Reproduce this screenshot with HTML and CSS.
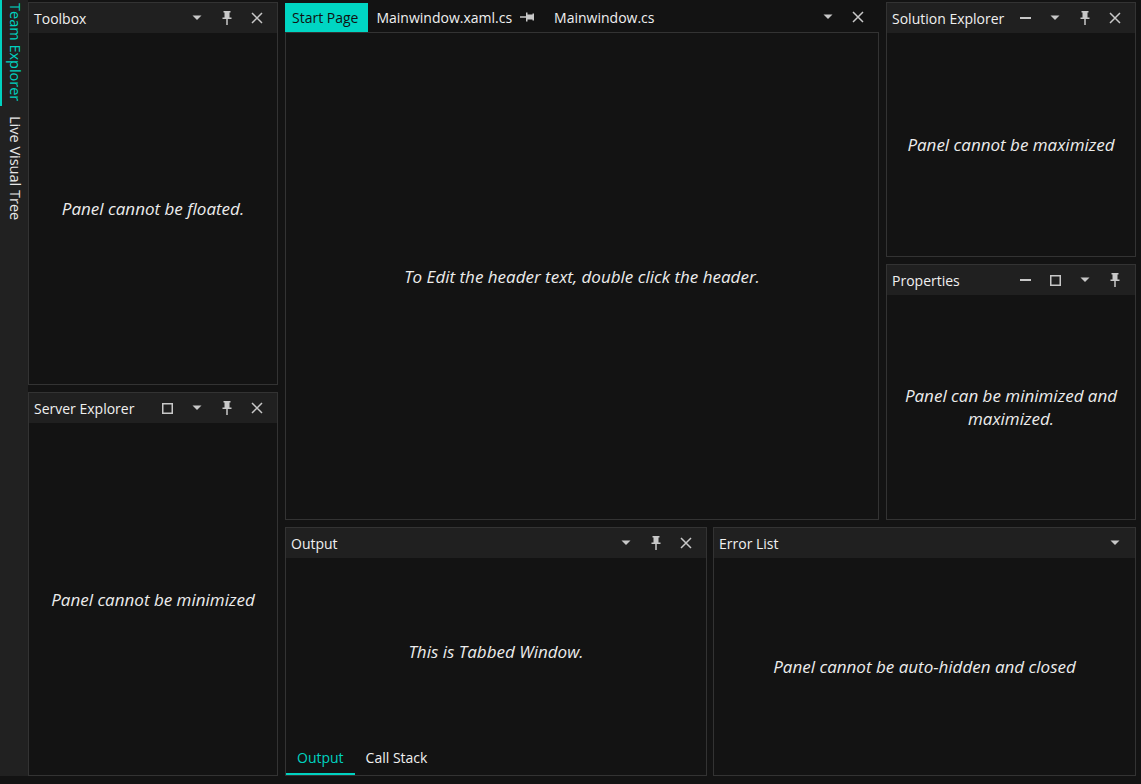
FILE: index.html
```html
<!DOCTYPE html>
<html>
<head>
<meta charset="utf-8">
<link rel="stylesheet" href="styles.css">
</head>
<body>
<div class="app">
  <div class="sidebar">
    <div class="side-tab active">Team Explorer</div>
    <div class="side-tab">Live Visual Tree</div>
  </div>
  <div class="workspace">
    <div class="col-left">
      <section class="panel toolbox">
        <header class="phead"><span class="ptitle">Toolbox</span>
          <span class="icons">
            <span class="ic"><svg width="10" height="6" viewBox="0 0 10 6"><path d="M0.5 0.5h9l-4.5 4.5z" fill="#c8c8c8"/></svg></span>
            <span class="ic"><svg width="10" height="14" viewBox="0 0 10 14"><path d="M1.5 0h7v1.5h-1v5h2v1.5h-3.75v6h-1.5v-6h-3.75v-1.5h2v-5h-1z" fill="#c8c8c8"/></svg></span>
            <span class="ic"><svg width="12" height="12" viewBox="0 0 12 12"><path d="M1 1L11 11M11 1L1 11" stroke="#c8c8c8" stroke-width="1.5"/></svg></span>
          </span>
        </header>
        <div class="pbody"><em>Panel cannot be floated.</em></div>
      </section>
      <section class="panel server">
        <header class="phead"><span class="ptitle">Server Explorer</span>
          <span class="icons">
            <span class="ic"><svg width="11" height="11" viewBox="0 0 11 11"><rect x="0.75" y="0.75" width="9.5" height="9.5" fill="none" stroke="#c8c8c8" stroke-width="1.5"/></svg></span>
            <span class="ic"><svg width="10" height="6" viewBox="0 0 10 6"><path d="M0.5 0.5h9l-4.5 4.5z" fill="#c8c8c8"/></svg></span>
            <span class="ic"><svg width="10" height="14" viewBox="0 0 10 14"><path d="M1.5 0h7v1.5h-1v5h2v1.5h-3.75v6h-1.5v-6h-3.75v-1.5h2v-5h-1z" fill="#c8c8c8"/></svg></span>
            <span class="ic"><svg width="12" height="12" viewBox="0 0 12 12"><path d="M1 1L11 11M11 1L1 11" stroke="#c8c8c8" stroke-width="1.5"/></svg></span>
          </span>
        </header>
        <div class="pbody"><em>Panel cannot be minimized</em></div>
      </section>
    </div>
    <div class="col-main">
      <div class="row-top">
        <section class="doc">
          <div class="doc-tabs">
            <span class="dtab active">Start Page</span>
            <span class="dtab">Mainwindow.xaml.cs</span>
            <span class="dpin"><svg width="14" height="10" viewBox="0 0 14 10"><path d="M0 4.25h6v-3.75h1.5v2h5v-1h1.5v7h-1.5v-1h-5v2h-1.5v-3.75h-6z" fill="#c8c8c8"/></svg></span>
            <span class="dtab">Mainwindow.cs</span>
            <span class="icons">
              <span class="ic"><svg width="10" height="6" viewBox="0 0 10 6"><path d="M0.5 0.5h9l-4.5 4.5z" fill="#c8c8c8"/></svg></span>
              <span class="ic"><svg width="12" height="12" viewBox="0 0 12 12"><path d="M1 1L11 11M11 1L1 11" stroke="#c8c8c8" stroke-width="1.5"/></svg></span>
            </span>
          </div>
          <div class="doc-body"><em>To Edit the header text, double click the header.</em></div>
        </section>
        <div class="col-right">
          <section class="panel solution">
            <header class="phead"><span class="ptitle">Solution Explorer</span>
              <span class="icons">
                <span class="ic"><svg width="11" height="2" viewBox="0 0 11 2"><rect width="11" height="2" fill="#c8c8c8"/></svg></span>
                <span class="ic"><svg width="10" height="6" viewBox="0 0 10 6"><path d="M0.5 0.5h9l-4.5 4.5z" fill="#c8c8c8"/></svg></span>
                <span class="ic"><svg width="10" height="14" viewBox="0 0 10 14"><path d="M1.5 0h7v1.5h-1v5h2v1.5h-3.75v6h-1.5v-6h-3.75v-1.5h2v-5h-1z" fill="#c8c8c8"/></svg></span>
                <span class="ic"><svg width="12" height="12" viewBox="0 0 12 12"><path d="M1 1L11 11M11 1L1 11" stroke="#c8c8c8" stroke-width="1.5"/></svg></span>
              </span>
            </header>
            <div class="pbody"><em>Panel cannot be maximized</em></div>
          </section>
          <section class="panel properties">
            <header class="phead"><span class="ptitle">Properties</span>
              <span class="icons">
                <span class="ic"><svg width="11" height="2" viewBox="0 0 11 2"><rect width="11" height="2" fill="#c8c8c8"/></svg></span>
                <span class="ic"><svg width="11" height="11" viewBox="0 0 11 11"><rect x="0.75" y="0.75" width="9.5" height="9.5" fill="none" stroke="#c8c8c8" stroke-width="1.5"/></svg></span>
                <span class="ic"><svg width="10" height="6" viewBox="0 0 10 6"><path d="M0.5 0.5h9l-4.5 4.5z" fill="#c8c8c8"/></svg></span>
                <span class="ic"><svg width="10" height="14" viewBox="0 0 10 14"><path d="M1.5 0h7v1.5h-1v5h2v1.5h-3.75v6h-1.5v-6h-3.75v-1.5h2v-5h-1z" fill="#c8c8c8"/></svg></span>
              </span>
            </header>
            <div class="pbody"><em>Panel can be minimized and maximized.</em></div>
          </section>
        </div>
      </div>
      <div class="row-bottom">
        <section class="panel output">
          <header class="phead"><span class="ptitle">Output</span>
            <span class="icons">
              <span class="ic"><svg width="10" height="6" viewBox="0 0 10 6"><path d="M0.5 0.5h9l-4.5 4.5z" fill="#c8c8c8"/></svg></span>
              <span class="ic"><svg width="10" height="14" viewBox="0 0 10 14"><path d="M1.5 0h7v1.5h-1v5h2v1.5h-3.75v6h-1.5v-6h-3.75v-1.5h2v-5h-1z" fill="#c8c8c8"/></svg></span>
              <span class="ic"><svg width="12" height="12" viewBox="0 0 12 12"><path d="M1 1L11 11M11 1L1 11" stroke="#c8c8c8" stroke-width="1.5"/></svg></span>
            </span>
          </header>
          <div class="pbody"><em>This is Tabbed Window.</em></div>
          <div class="btabs">
            <span class="btab active">Output</span>
            <span class="btab">Call Stack</span>
          </div>
        </section>
        <section class="panel errors">
          <header class="phead"><span class="ptitle">Error List</span>
            <span class="icons">
              <span class="ic"><svg width="10" height="6" viewBox="0 0 10 6"><path d="M0.5 0.5h9l-4.5 4.5z" fill="#c8c8c8"/></svg></span>
            </span>
          </header>
          <div class="pbody"><em>Panel cannot be auto-hidden and closed</em></div>
        </section>
      </div>
    </div>
  </div>
</div>
</body>
</html>
```

FILE: styles.css
```css
* { box-sizing: border-box; }
html, body {
  margin: 0;
  padding: 0;
  background: #131313;
  width: 1141px;
  height: 784px;
  overflow: hidden;
  font-family: "Open Sans", "Noto Sans", sans-serif;
  color: #f0f0f0;
}
.app {
  display: flex;
  height: 776px;
}
.sidebar {
  width: 28px;
  flex: none;
  background: #212121;
  display: flex;
  flex-direction: column;
  align-items: stretch;
}
.side-tab {
  writing-mode: vertical-rl;
  font-size: 14.5px;
  line-height: 22px;
  padding: 3px 0 5px 0;
  color: #e8e8e8;
  border-left: 2px solid transparent;
  text-align: center;
  display: flex;
  align-items: center;
}
.side-tab.active {
  color: #00d2c0;
  border-left-color: #00d2c0;
}
.side-tab + .side-tab { margin-top: 7px; }
.workspace {
  flex: 1;
  display: flex;
  gap: 7px;
  padding-top: 2px;
  padding-right: 5px;
}
.col-left {
  width: 250px;
  flex: none;
  display: flex;
  flex-direction: column;
  gap: 7px;
}
.toolbox { height: 383px; flex: none; }
.server { flex: 1; }
.col-main {
  flex: 1;
  display: flex;
  flex-direction: column;
  gap: 7px;
}
.row-top {
  height: 518px;
  flex: none;
  display: flex;
  gap: 7px;
}
.row-bottom {
  flex: 1;
  display: flex;
  gap: 6px;
}
.col-right {
  width: 250px;
  flex: none;
  display: flex;
  flex-direction: column;
  gap: 7px;
}
.solution { height: 255px; flex: none; }
.properties { flex: 1; }
.output { width: 422px; flex: none; }
.errors { flex: 1; }

.panel {
  border: 1px solid #333333;
  background: #131313;
  display: flex;
  flex-direction: column;
  min-height: 0;
}
.phead {
  height: 30px;
  flex: none;
  background: #202020;
  display: flex;
  align-items: center;
  padding-left: 5px;
  padding-right: 5px;
}
.ptitle {
  font-size: 14px;
  color: #f0f0f0;
  flex: 1;
  white-space: nowrap;
}
.icons {
  display: flex;
  align-items: center;
  margin-left: auto;
}
.ic {
  width: 30px;
  height: 30px;
  display: flex;
  align-items: center;
  justify-content: center;
}
.pbody {
  flex: 1;
  display: flex;
  align-items: center;
  justify-content: center;
  text-align: center;
  padding: 0 12px;
}
.pbody em {
  font-style: italic;
  font-size: 17px;
  line-height: 23px;
  color: #ececec;
}

.doc {
  width: 594px;
  flex: none;
  display: flex;
  flex-direction: column;
}
.doc-tabs {
  height: 30px;
  flex: none;
  display: flex;
  align-items: stretch;
  padding-right: 6px;
}
.dtab {
  font-size: 14px;
  display: flex;
  align-items: center;
  padding: 0 8px;
  color: #f0f0f0;
  white-space: nowrap;
}
.dtab.active {
  background: #00d6c3;
  color: #111111;
  padding: 0 10px 0 7px;
  margin-top: 1px;
}
.dpin {
  display: flex;
  align-items: center;
  padding: 0 12px 0 0;
}
.doc-body {
  flex: 1;
  border: 1px solid #333333;
  display: flex;
  align-items: center;
  justify-content: center;
}
.doc-body em {
  font-style: italic;
  font-size: 17px;
  color: #ececec;
}

.btabs {
  height: 30px;
  flex: none;
  display: flex;
  align-items: stretch;
}
.btab {
  font-size: 14px;
  padding: 0 11px 3px;
  display: flex;
  align-items: center;
  color: #f0f0f0;
  border-bottom: 2px solid transparent;
}
.btab.active {
  color: #00d2c0;
  border-bottom-color: #00d2c0;
}
```
